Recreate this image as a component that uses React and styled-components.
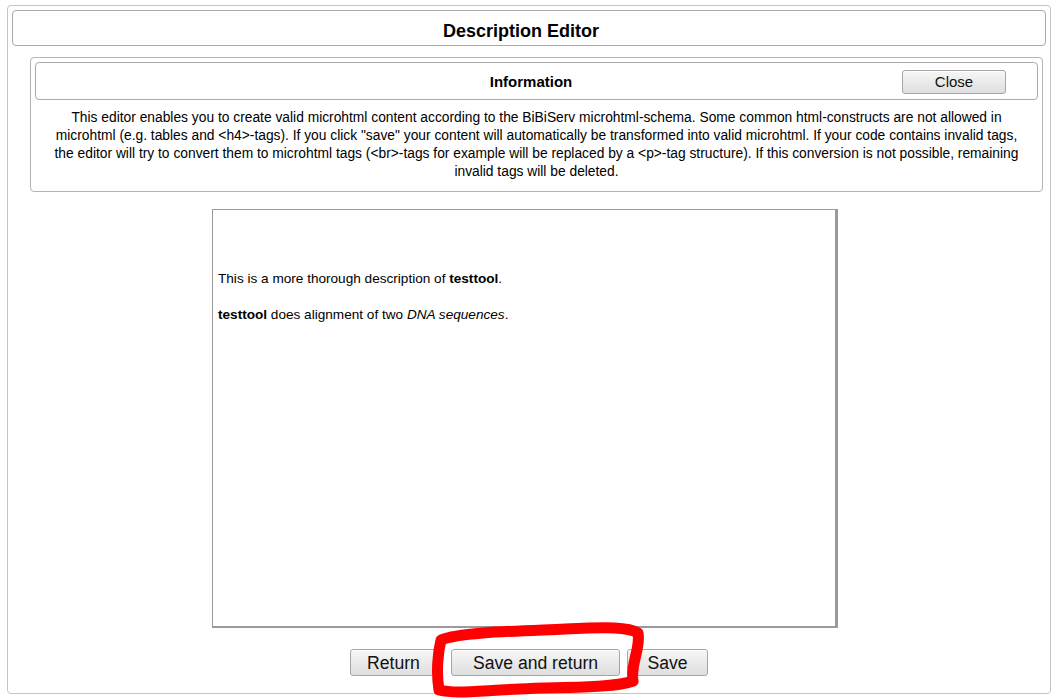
import React from "react";
import styled, { createGlobalStyle } from "styled-components";

const GlobalStyle = createGlobalStyle`
  html, body {
    margin: 0;
    padding: 0;
    background: #ffffff;
    font-family: "Liberation Sans", Arial, sans-serif;
    color: #000;
  }
`;

const Page = styled.div`
  position: relative;
  width: 1058px;
  height: 700px;
  box-sizing: border-box;
  padding: 5px 7px 6px 7px;
`;

const Frame = styled.div`
  box-sizing: border-box;
  height: 689px;
  border: 1px solid #c4c4c4;
  border-radius: 4px;
  padding: 4px 4px 0 4px;
  display: flex;
  flex-direction: column;
`;

const TitleBar = styled.div`
  height: 36px;
  box-sizing: border-box;
  border: 1px solid #a9a9a9;
  border-radius: 4px;
  display: flex;
  align-items: center;
  justify-content: center;
  font-size: 18px;
  font-weight: bold;
  padding: 6px 16px 0 0;
`;

const InfoPanel = styled.div`
  margin: 11px 3px 0 18px;
  box-sizing: border-box;
  border: 1px solid #b4b4b4;
  border-radius: 4px;
  padding: 4px 4px 10px 4px;
`;

const InfoHeader = styled.div`
  height: 38px;
  box-sizing: border-box;
  border: 1px solid #a9a9a9;
  border-radius: 4px;
  display: grid;
  grid-template-columns: 1fr auto 1fr;
  align-items: center;
`;

const InfoTitle = styled.div`
  grid-column: 2;
  font-size: 15px;
  font-weight: bold;
  margin-left: -11px;
  padding-top: 1px;
`;

const Button = styled.button`
  font-family: "Liberation Sans", Arial, sans-serif;
  font-size: ${(p) => (p.$small ? "15px" : "17.6px")};
  color: #111;
  height: ${(p) => (p.$small ? "24px" : "27px")};
  width: ${(p) => p.$w}px;
  padding: ${(p) => (p.$small ? "0" : "1px 0 0 0")};
  border: 1px solid #a6a6a6;
  border-radius: 3px;
  background: linear-gradient(#f7f7f7, #dedede);
  box-shadow: inset 0 1px 0 #ffffff;
  cursor: pointer;
`;

const CloseWrap = styled.div`
  grid-column: 3;
  justify-self: end;
  margin-right: 31px;
  margin-top: 1px;
  display: flex;
`;

const InfoText = styled.p`
  margin: 9px 12px 0 12px;
  font-size: 13.8px;
  line-height: 18px;
  text-align: center;
`;

const Editor = styled.div`
  box-sizing: border-box;
  width: 626px;
  height: 419px;
  margin: 17px 0 0 200px;
  border-top: 1px solid #9a9a9a;
  border-left: 1px solid #9a9a9a;
  border-right: 3px solid #9a9a9a;
  border-bottom: 2px solid #9a9a9a;
  padding: 61px 6px 0 5px;
  font-size: 13.6px;
  line-height: 16px;

  p {
    margin: 0 0 20px 0;
  }
`;

const ButtonRow = styled.div`
  display: flex;
  justify-content: center;
  align-items: center;
  margin-top: 21px;
  gap: 14px;

  & > button:last-child {
    margin-left: -7px;
  }
`;

const Scribble = styled.svg`
  position: absolute;
  left: 0;
  top: 0;
  width: 1058px;
  height: 700px;
  pointer-events: none;
`;

export default function App() {
  return (
    <>
      <GlobalStyle />
      <Page>
        <Frame>
          <TitleBar>Description Editor</TitleBar>
          <InfoPanel>
            <InfoHeader>
              <InfoTitle>Information</InfoTitle>
              <CloseWrap>
                <Button $small $w={104}>
                  Close
                </Button>
              </CloseWrap>
            </InfoHeader>
            <InfoText>
              This editor enables you to create valid microhtml content according to the
              BiBiServ microhtml-schema. Some common html-constructs are not allowed in
              <br />
              microhtml (e.g. tables and &lt;h4&gt;-tags). If you click "save" your content will
              automatically be transformed into valid microhtml. If your code contains invalid
              tags,
              <br />
              the editor will try to convert them to microhtml tags (&lt;br&gt;-tags for example
              will be replaced by a &lt;p&gt;-tag structure). If this conversion is not possible,
              remaining
              <br />
              invalid tags will be deleted.
            </InfoText>
          </InfoPanel>
          <Editor>
            <p>
              This is a more thorough description of <b>testtool</b>.
            </p>
            <p>
              <b>testtool</b> does alignment of two <i>DNA sequences</i>.
            </p>
          </Editor>
          <ButtonRow>
            <Button $w={87}>Return</Button>
            <Button $w={169}>Save and return</Button>
            <Button $w={81}>Save</Button>
          </ButtonRow>
        </Frame>
        <Scribble viewBox="0 0 1058 700">
          <path
            d="M 441 640 C 460 632, 520 631, 565 629 S 628 627, 638 633 C 641 648, 630 665, 633 681 C 615 688, 565 687, 520 689 S 455 694, 439 690 C 436 672, 438 652, 441 640 Z"
            fill="none"
            stroke="#ff0000"
            strokeWidth="11"
            strokeLinejoin="round"
            strokeLinecap="round"
          />
        </Scribble>
      </Page>
    </>
  );
}
